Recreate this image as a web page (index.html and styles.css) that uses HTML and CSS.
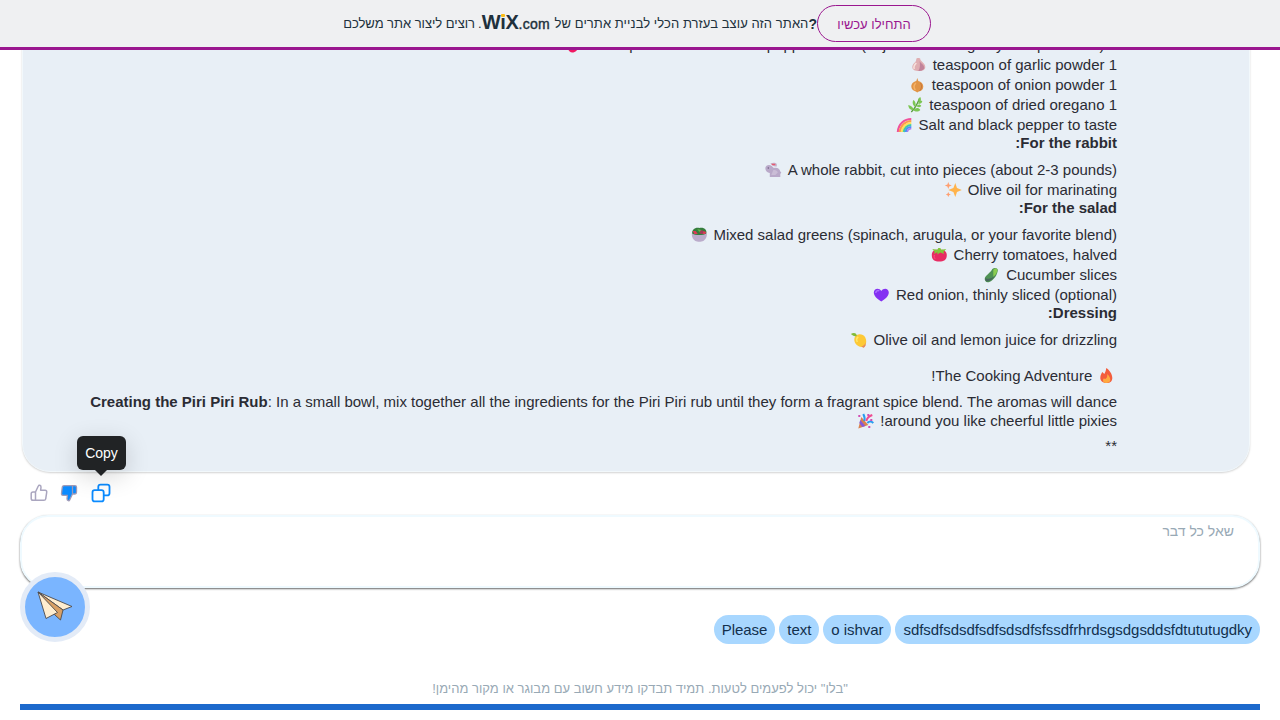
FILE: index.html
```html
<!DOCTYPE html>
<html lang="he">
<head>
<meta charset="utf-8">
<title>Chat</title>
<link rel="stylesheet" href="styles.css">
</head>
<body>
<header class="banner">
  <div class="banner-text">
    <span class="promo" dir="rtl">רוצים ליצור אתר משלכם</span>
    <span class="wix"><span class="dot">.</span><span class="logo" dir="ltr"><span>W</span><span class="i">ı<i class="i-dot"></i></span><span>X</span></span><b class="com">.com</b></span>
    <span class="made" dir="rtl">האתר הזה עוצב בעזרת הכלי לבניית אתרים של</span><b class="q">?</b>
  </div>
  <a class="start" dir="rtl">התחילו עכשיו</a>
</header>

<main class="page">
  <section class="message" dir="rtl">
    <ul>
      <li>1 tablespoon of crushed red pepper flakes (adjust according to your spice level) <svg class="em" viewBox="0 0 20 16"><path d="M2 4C6 2 12 3 14 9c0 4-3 6.500-6 6.500-4 0-6-6-6-11.500z" fill="#f01862"/></svg></li>
      <li>1 teaspoon of garlic powder <svg class="em" viewBox="0 0 20 16"><path d="M10 1c1 0 2 .4 2 1-.4 2 5 4 5 8 0 3-3 4-6.500 4S4 13 4 10c0-4 4-4 4-8 0-.6 1-1 2-1z" fill="#dfaeb2"/><path d="M11 3c0 3 5 4 5 8-1 3-5 3-6 3 2-3 2-7 1-11z" fill="#c1839a"/><path d="M8 6c-2 2-3 4-2 6" stroke="#f7e2dc" stroke-width="1.500" fill="none"/></svg></li>
      <li>1 teaspoon of onion powder <svg class="em" viewBox="0 0 20 16"><path d="M10 1l1 3c3 .5 5 3 5 5.500 0 3-2 4.500-4.500 5L10 15.500 8.500 14.500C6 14 4 12 4 9.500 4 6.500 6.500 4.500 9 4z" fill="#e19547"/><path d="M8.500 6c-2 2-2 5-.5 7" stroke="#f5b368" stroke-width="1.500" fill="none"/><path d="M13 6c2 2 1.500 6-1 8" stroke="#c8783d" fill="none"/></svg></li>
      <li>1 teaspoon of dried oregano <svg class="em" viewBox="0 0 20 16"><path d="M6 15C10 11 12 7 14 2" stroke="#5a9b3c" stroke-width="1.300" fill="none"/><g fill="#7cc653"><path d="M14 5c-2-2-1-4 1-5 1 2 1 4-1 5zM13 7c0-3 2-4 4-3 0 2-2 3-4 3zM10 10c-3-2-3-5-2-7 2 1 3 4 2 7zM11 9c2-2 4-2 5 0-2 2-4 1-5 0zM8 13c-3 0-5-2-5-5 3 1 5 2 5 5zM8 13c2-2 5-3 7 0-2 2-5 2-7 0z"/></g></svg></li>
      <li>Salt and black pepper to taste <svg class="em" viewBox="0 0 20 16"><g fill="none" stroke-width="2.100"><path d="M3.500 15C4 7 10 2 17 2" stroke="#f0529b"/><path d="M5.500 15C6 9 11 4 17 4" stroke="#ff994b"/><path d="M7.500 15C8 10 12 6 17 6" stroke="#ffe05a"/><path d="M9.500 15C10 11 13 8 17 8" stroke="#45cda0"/><path d="M11.500 15c0-3 2-5 5.500-5" stroke="#4c91f7"/><path d="M13.200 15c0-2 1-3 3.800-3.500" stroke="#ab7cec" stroke-width="1.300"/></g></svg></li>
    </ul>
    <h3>For the rabbit:</h3>
    <ul>
      <li>A whole rabbit, cut into pieces (about 2-3 pounds) <svg class="em" viewBox="0 0 20 16"><path d="M2 6C2.500 3 6 2 8.500 4c1 1 1.500 1.500 2 2 3.500-.8 6 .8 6.500 3.500l1 1-1 1.500v3H6.500V11C4 10.500 2 9 2 6z" fill="#b9a9c9"/><path d="M7 1.500c3-1.200 6-.8 6.500.8V4.500C11 4.500 9 4 7 1.500z" fill="#c5b4cd"/><path d="M8 1.800h4v1.500H9z" fill="#e85a70"/><path d="M10 8c2 0 4 .5 4.500 2.500L12 13H8" fill="#cabdd6"/><circle cx="5" cy="6" r=".7" fill="#685579"/></svg></li>
      <li>Olive oil for marinating <svg class="em" viewBox="0 0 20 16"><path d="M12 1l1.700 5L18.500 8l-4.800 2L12 15l-1.900-5L5 8l5.100-2z" fill="#ffb34b"/><path d="M5 0l.9 2.600L8.500 3.500l-2.600.9L5 7l-.9-2.600L1.500 3.500l2.600-.9zM5 10l.8 1.700 1.700.8-1.700.8L5 15l-.8-1.700-1.700-.8 1.700-.8z" fill="#ff9f70"/></svg></li>
    </ul>
    <h3>For the salad:</h3>
    <ul>
      <li>Mixed salad greens (spinach, arugula, or your favorite blend) <svg class="em" viewBox="0 0 20 16"><path d="M3 7C2 3 6 0 10 1c5-1 8 2 7 6l-4 2H6z" fill="#357d3d"/><path d="M3.500 4h3l2 3H5zM14 4l3 1-1 2h-3z" fill="#df3856"/><circle cx="12" cy="5" r="2" fill="#9c3e59"/><path d="M8 2l4 1-2 2z" fill="#62b745"/><path d="M2.500 6.500c4 2 11 2 15 0 .3 4-1.500 6-3.500 7.500-2 1-6 1-8 0-2-1.500-3.700-3.500-3.500-7.500z" fill="#bbaccb"/></svg></li>
      <li>Cherry tomatoes, halved <svg class="em" viewBox="0 0 20 16"><path d="M2.500 8c0-5 4-6 7.500-5 4-1 7.500 1 7.500 5 0 5-3 6.500-7.500 6.500S2.500 13 2.500 8z" fill="#e82b63"/><path d="M3 2l5 .8L9 1h2l1 1.800 5-.8-3 3 1 2-4-1.500-3 2 .2-2.300L4.500 7l1-2z" fill="#80c83b"/><path d="M5 8c-.5 2 0 3 1 4" stroke="#ff5580" fill="none"/></svg></li>
      <li>Cucumber slices <svg class="em" viewBox="0 0 20 16"><path d="M11 2c2-2 5.500-1 5.500 1 0 4-4 10.500-8.500 12-3 1-5-1-4.500-4C4.500 8 9 6 11 2z" fill="#4f9254"/><path d="M12 3c1-2 4-2 4 0 0 3-2 5-4 7" fill="#8bcc50"/><path d="M4 11c-.5 3 1.500 4 3.500 3 2-.6 4-2 6-5-3 2-5.500 4-9.500 2z" fill="#47675b"/></svg></li>
      <li>Red onion, thinly sliced (optional) <svg class="em" viewBox="0 0 20 16"><path d="M10 14.500C6 12 2.500 9 2.500 5.500 2.500 1 8 .5 10 4c2-3.500 7.500-3 7.500 1.500 0 3.500-3.500 6.500-7.500 9z" fill="#8430f2"/><path d="M4.500 6c0-2 2-3 3.500-2" stroke="#ab70ff" stroke-width="1.500" fill="none"/></svg></li>
    </ul>
    <h3>Dressing:</h3>
    <ul>
      <li>Olive oil and lemon juice for drizzling <svg class="em" viewBox="0 0 20 16"><path d="M5.500 5c2-4 8.500-3.500 10.500.5 1.500 3 1 6 0 8L14.500 15.500l-2-.5C7.500 14.500 3.500 10 5.500 5z" fill="#fdc936"/><path d="M16.300 9c.2 3-1.300 4.800-4.300 5.500l2.500 1.200 1.700-2z" fill="#e5895d"/><path d="M9 5C7 6 7 8 8 10" stroke="#ffe868" stroke-width="1.500" fill="none"/><path d="M1.500 2c3-2 6-1 6 2-3 1-4-1-6-2z" fill="#83bb37"/></svg></li>
    </ul>
    <p class="adventure"><svg class="em" viewBox="0 0 20 16"><path d="M10 0c3 2 6 6 6 10 0 3-2 5-5.500 5S4 13 4 10c0-3 1-4 2-6l2 2c1-2 1.500-3 2-6z" fill="#f35d3c"/><path d="M11 6c2 2 3 4 3 6 0 2-2 3-4 3s-4-1-3-4c1-1 1 0 2 0 2-1 2-3 2-5z" fill="#ffa940"/></svg> The Cooking Adventure!</p>
    <p class="step"><b>Creating the Piri Piri Rub</b>: In a small bowl, mix together all the ingredients for the Piri Piri rub until they form a fragrant spice blend. The aromas will dance<br>around you like cheerful little pixies! <svg class="em" viewBox="0 0 20 16"><path d="M6 4l7 8-10 3.500z" fill="#d9824e"/><path d="M5 7l5 6-3 1-3-4z" fill="#8659d9"/><path d="M9 8c1-3 0-5-1-7M12 10c2-2 4-2 6 0" fill="none" stroke="#279df0" stroke-width="2"/><path d="M11 8c1-4 3-5 6-6" fill="none" stroke="#ef4c91" stroke-width="2"/><path d="M3 2h2v2H3zM12 1h2v2h-2zM15 6h2v2h-2zM13 13h2v2h-2z" fill="#d04eb5"/></svg></p>
    <p class="stars">**</p>
  </section>

  <div class="actions">
    <svg class="ic" width="18" height="18" viewBox="0 0 18 18" fill="none" stroke="#aaa6bf" stroke-width="1.500" stroke-linejoin="round"><path d="M5.500 8L8.300 2Q8.700 1 9.800 1.300 11.200 1.800 11 3.500L10.600 6.200H15Q17 6.400 16.700 8.300L15.700 14.800Q15.400 16.300 14 16.300H5.500zM5.500 8H3Q1.200 8 1.200 9.800V14.500Q1.200 16.300 3 16.300H5.500"/></svg>
    <svg class="ic" width="18" height="18" viewBox="0 0 18 18" fill="#0b8bff" stroke="#a09bb8" stroke-width="1.300" stroke-linejoin="round"><path d="M12.500 10L9.700 16Q9.300 17 8.300 16.700 6.800 16.200 7 14.500L7.400 11.300H3Q1.200 11.200 1.500 9.300L2.300 3Q2.600 1.700 4 1.700H12.500zM12.500 1.700H15Q16.500 1.700 16.500 3.300V8.300Q16.500 10 15 10H12.500"/></svg>
    <div class="copy">
      <svg class="ic" width="20" height="20" viewBox="0 0 20 20" fill="none" stroke="#0b8bff" stroke-width="1.800"><rect x="1.500" y="7.200" width="11.200" height="11.200" rx="2.200"/><path d="M7.300 7V3.800Q7.300 1.600 9.500 1.600H16.300Q18.500 1.600 18.500 3.800V10.200Q18.500 12.400 16.300 12.400H13"/></svg>
      <span class="tip">Copy</span>
    </div>
  </div>

  <div class="input" dir="rtl">שאל כל דבר</div>

  <div class="chips">
    <span>Please</span><span>text</span><span>o ishvar</span><span>sdfsdfsdsdfsdfsdsdfsfssdfrhrdsgsdgsddsfdtututugdky</span>
  </div>

  <p class="note" dir="rtl">"בלו" יכול לפעמים לטעות. תמיד תבדקו מידע חשוב עם מבוגר או מקור מהימן!</p>
  <div class="bar"></div>

  <div class="send">
    <svg width="38" height="34" viewBox="0 0 38 34" stroke="#4c4a4c" stroke-width=".9" stroke-linejoin="round"><path d="M2 2L36 16.500 27 20z" fill="#ffedd0"/><path d="M2 2L27 20 24.500 30 19 25z" fill="#d9a066"/><path d="M2 2L21.500 22.500 10 28.500z" fill="#ffedd0"/></svg>
  </div>
</main>
</body>
</html>
```

FILE: styles.css
```css
* { box-sizing: border-box; }
body {
  margin: 0;
  height: 720px;
  overflow: hidden;
  background: #fff;
  font-family: "Liberation Sans", Arial, sans-serif;
  font-size: 15px;
  color: #2b2c34;
}
ul, p, h3 { margin: 0; padding: 0; list-style: none; }

.banner {
  position: fixed;
  z-index: 5;
  top: 0; left: 0; right: 0;
  height: 50px;
  padding: 0 0 0 343px;
  display: flex;
  align-items: center;
  background: #eff0f2;
  border-bottom: 3px solid #9a168f;
  color: #20303c;
  font-size: 13px;
  white-space: nowrap;
}
.banner-text { display: flex; align-items: center; width: 474px; height: 20px; }
.promo { width: 132px; letter-spacing: -.03px; }
.wix { display: flex; align-items: center; width: 75px; margin: 0 auto 0 3px; }
.logo { display: flex; font-size: 20px; font-weight: bold; line-height: 20px; letter-spacing: -.3px; margin-top: -3px; }
.i { position: relative; }
.i-dot { position: absolute; left: 1px; top: 2px; width: 4px; height: 3px; border-radius: 1px; background: #fbbd15; }
.com { font-size: 14px; font-weight: normal; letter-spacing: .3px; -webkit-text-stroke: .4px #20303c; }
.made { letter-spacing: .07px; }
.q { font-size: 14px; }
.start {
  width: 114px; height: 37px;
  border: 1px solid #9a168f;
  border-radius: 19px;
  color: #9a168f;
  text-align: center;
  line-height: 37px;
}

.page { position: relative; padding: 0 20px; }
.message {
  height: 472px;
  margin: 0 10px 0 2px;
  padding: 34px 132px 0 0;
  background: #e8eff6;
  border: 1px solid #f2f8fb;
  border-radius: 0 0 28px 28px;
  box-shadow: 0 1px 2px rgba(0,0,0,.18);
  white-space: nowrap;
}
.message li { height: 20px; line-height: 20px; }
.message h3 { height: 25px; font-size: 15px; line-height: 16px; }
.em { width: 20.6px; height: 16px; vertical-align: -3px; }
.adventure { margin-top: 16px; line-height: 20px; height: 20px; }
.step { margin-top: 6px; line-height: 19px; height: 38px; }
.stars { margin-top: 7px; line-height: 17px; }

.actions { display: flex; align-items: center; gap: 12px; height: 43px; padding: 0 0 2px 10px; }
.ic { display: block; }
.copy { position: relative; margin-left: 1px; }
.tip {
  position: absolute;
  left: -14px; top: -47px;
  width: 49px; height: 34px;
  border-radius: 6px;
  background: #212325;
  color: #fff;
  font-size: 14px;
  line-height: 34px;
  text-align: center;
  box-shadow: 0 6px 24px rgba(0,0,0,.16);
}
.tip::after {
  content: "";
  position: absolute;
  left: 18px; top: 34px;
  border: 6px solid transparent;
  border-top-color: #212325;
  border-bottom: 0;
}

.input {
  height: 73px;
  padding: 6px 24px;
  border: 2px solid #effaff;
  border-radius: 28px;
  box-shadow: 0 1px 2px rgba(0,0,0,.6);
  background: #fff;
  color: #98a9b5;
  font-size: 14px;
  line-height: 17px;
}
.chips { display: flex; justify-content: flex-end; gap: 4px; margin-top: 27px; }
.chips span {
  height: 29px;
  padding: 0 8px;
  border-radius: 15px;
  background: #a8d7ff;
  color: #12304d;
  letter-spacing: -.05px;
  line-height: 30px;
}
.note { margin-top: 36px; height: 24px; line-height: 18px; text-align: center; font-size: 13px; color: #98a9b5; }
.bar { height: 6px; background: #1d69cc; }
.send {
  position: absolute;
  left: 20px; top: 572px;
  width: 70px; height: 70px;
  border: 5px solid #e3ebf7;
  border-radius: 50%;
  background: #7ab5ff;
  display: flex;
  align-items: center;
  justify-content: center;
}
```
